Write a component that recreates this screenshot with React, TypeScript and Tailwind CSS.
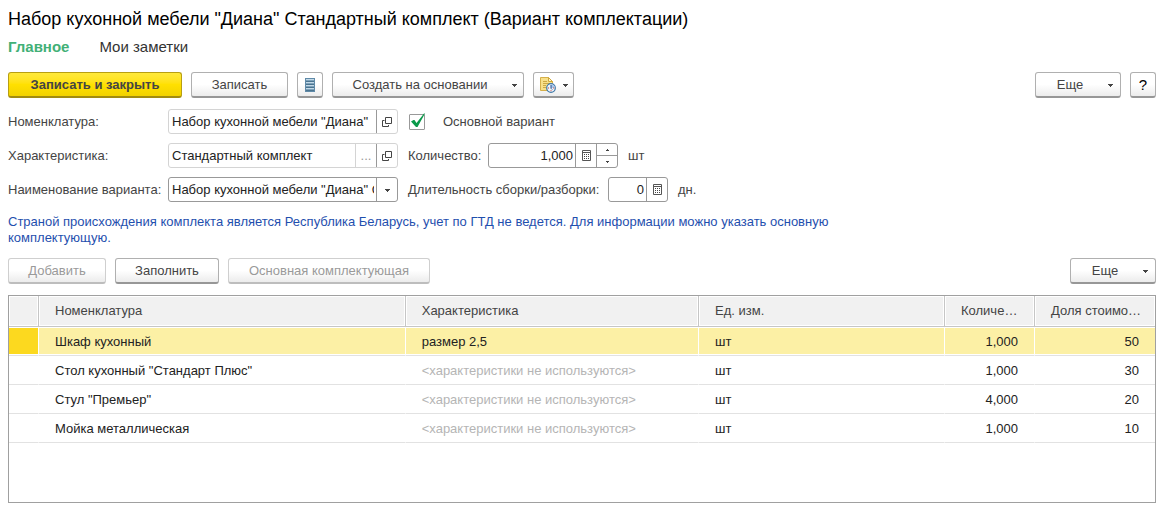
import type { ButtonHTMLAttributes, ReactNode } from "react";
import clsx from "clsx";

interface KitItem {
  name: string;
  feature?: string;
  unit: string;
  quantity: string;
  share: number;
}

const items: KitItem[] = [
  { name: "Шкаф кухонный", feature: "размер 2,5", unit: "шт", quantity: "1,000", share: 50 },
  { name: 'Стол кухонный "Стандарт Плюс"', unit: "шт", quantity: "1,000", share: 30 },
  { name: 'Стул "Премьер"', unit: "шт", quantity: "4,000", share: 20 },
  { name: "Мойка металлическая", unit: "шт", quantity: "1,000", share: 10 },
];

function Caret() {
  return (
    <svg width="5" height="5" viewBox="0 0 5 5" className="shrink-0" aria-hidden="true">
      <path d="M0 2h5v1H4v1H3v1H2V4H1V3H0z" fill="#444" />
    </svg>
  );
}

function OpenIcon() {
  return (
    <svg width="10" height="11" viewBox="0 0 10 11" fill="none" stroke="#444" aria-hidden="true">
      <path d="M3.5 1.5h6v6h-6z" />
      <path d="M2.5 4.5h-2v6h6V9" />
    </svg>
  );
}

function CalculatorIcon() {
  return (
    <svg width="9" height="11" viewBox="0 0 9 11" aria-hidden="true">
      <path d="M0.5 0.5h8v10h-8z" fill="none" stroke="#555" />
      <path d="M1 2.5h7" stroke="#555" />
      <path
        d="M2 4h1v1H2zM4 4h1v1H4zM6 4h1v1H6zM2 6h1v1H2zM4 6h1v1H4zM6 6h1v1H6zM2 8h1v1H2zM4 8h1v1H4zM6 8h1v1H6z"
        fill="#444"
      />
    </svg>
  );
}

function ListIcon() {
  return (
    <svg width="10" height="14" viewBox="0 0 10 14" aria-hidden="true">
      <path d="M0 0h10v14H0z" fill="#7da2bb" />
      <path d="M0 0h10v1H0zM0 13h10v1H0zM0 0h1v14H0zM9 0h1v14H9z" fill="#5f8aa8" />
      <path d="M1 1h8v1H1zM1 4h8v1H1zM1 7h8v1H1zM1 10h8v1H1z" fill="#c3d9e8" />
      <path d="M1 3h8v1H1zM1 6h8v1H1zM1 9h8v1H1zM1 12h8v1H1z" fill="#4b7490" />
    </svg>
  );
}

function ReportIcon() {
  return (
    <svg width="16" height="16" viewBox="0 0 16 16" aria-hidden="true">
      <path d="M0.5 0.5h8l4 4v9h-12z" fill="#f8e08a" stroke="#d6b04a" />
      <path d="M8.5 0.5v4h4z" fill="#fff3c4" stroke="#cfa83c" />
      <path d="M3 4.5h4M3 6.5h7M3 8.5h3M3 10.5h3" stroke="#cda945" />
      <circle cx="11" cy="11" r="4.3" fill="#eef5fb" stroke="#3f78a8" strokeWidth="1.2" />
      <path d="M11 11V7.3A3.7 3.7 0 0 1 14.7 11z" fill="#a9c8ec" />
      <path d="M11 8v3.3l1.2 1.2" fill="none" stroke="#274d8a" />
      <path d="M8 11h1M13.2 11h1M11 13.2v1" stroke="#c9413a" />
    </svg>
  );
}

interface BarButtonProps extends ButtonHTMLAttributes<HTMLButtonElement> {
  children: ReactNode;
}

function BarButton({ children, className, ...props }: BarButtonProps) {
  return (
    <button
      type="button"
      className={clsx(
        "flex h-[26px] shrink-0 items-center justify-center rounded-[3px] border border-b-2 bg-linear-to-b from-white from-50% to-[#ececec]",
        props.disabled
          ? "border-[#cfcfcf] border-b-[#bdbdbd] text-[#9a9a9a]"
          : "border-[#b0b0b0] border-b-[#979797] text-[#444]",
        className,
      )}
      {...props}
    >
      {children}
    </button>
  );
}

function MoreButton() {
  return (
    <BarButton className="w-[86px] gap-[25px] pl-3.5">
      Еще
      <Caret />
    </BarButton>
  );
}

interface FieldProps {
  id: string;
  value: string;
  className: string;
  muted?: boolean;
  numeric?: boolean;
  children: ReactNode;
}

function Field({ id, value, className, muted, numeric, children }: FieldProps) {
  return (
    <div
      className={clsx(
        "flex h-[25px] shrink-0 rounded-[3px] border bg-white",
        muted ? "border-[#d4d4d4]" : "border-[#999]",
        className,
      )}
    >
      <input
        id={id}
        defaultValue={value}
        className={clsx(
          "min-w-0 flex-1 bg-transparent text-[#222] outline-none",
          numeric ? "pr-0.5 text-right" : "mr-0.5 pl-[3px]",
        )}
      />
      {children}
    </div>
  );
}

interface FieldButtonProps {
  label: string;
  light?: boolean;
  children: ReactNode;
}

function FieldButton({ label, light, children }: FieldButtonProps) {
  return (
    <button
      type="button"
      aria-label={label}
      className={clsx(
        "flex w-[21px] shrink-0 items-center justify-center border-l",
        light ? "border-[#d4d4d4] text-[#999]" : "border-[#999]",
      )}
    >
      {children}
    </button>
  );
}

export default function App() {
  return (
    <main className="pt-2 pr-[11px] pb-1.5 pl-2 font-['Liberation_Sans',Arial,sans-serif] text-[13px] leading-4 text-[#444]">
      <h1 className="text-[18px] leading-[22px] text-black">
        Набор кухонной мебели "Диана" Стандартный комплект (Вариант комплектации)
      </h1>

      <nav className="mt-2 flex gap-[30px] text-[15px] leading-[18px]">
        <a href="#main" className="font-bold text-[#42b077]">
          Главное
        </a>
        <a href="#notes" className="text-[#333]">
          Мои заметки
        </a>
      </nav>

      <div className="mt-4 flex items-center gap-[9px]">
        <button
          type="button"
          className="h-[26px] w-[174px] shrink-0 rounded-[3px] border border-b-2 border-[#b89f12] border-b-[#a18b10] bg-linear-to-b from-[#ffe93a] via-[#ffe000] to-[#f2d200] font-bold text-[#444]"
        >
          Записать и закрыть
        </button>
        <BarButton className="w-[97px]">Записать</BarButton>
        <BarButton className="w-[26px]" aria-label="Список">
          <ListIcon />
        </BarButton>
        <BarButton className="w-[192px] gap-[25px] pl-3.5">
          Создать на основании
          <Caret />
        </BarButton>
        <BarButton className="w-[41px] gap-[7px]" aria-label="Отчеты">
          <ReportIcon />
          <Caret />
        </BarButton>
        <div className="ml-auto flex gap-[9px]">
          <MoreButton />
          <BarButton className="w-[26px] text-[15px] text-black">?</BarButton>
        </div>
      </div>

      <div className="mt-[11px] grid grid-cols-[150px_230px_1fr] items-center gap-x-2.5 gap-y-[9px]">
        <label htmlFor="item" className="whitespace-nowrap">
          Номенклатура:
        </label>
        <Field id="item" value={'Набор кухонной мебели "Диана"'} className="w-full" muted>
          <FieldButton label="Открыть">
            <OpenIcon />
          </FieldButton>
        </Field>
        <div className="flex items-center gap-[18px] pl-px">
          <span className="relative flex size-4">
            <input
              id="main-variant"
              type="checkbox"
              defaultChecked
              className="peer size-4 appearance-none rounded-[1px] border border-[#999] bg-white"
            />
            <svg
              viewBox="0 0 16 16"
              className="pointer-events-none absolute -top-px left-px hidden size-4 peer-checked:block"
              aria-hidden="true"
            >
              <path d="M1 8.5l2.5-1.5h1l2 3L14 0.5h1L7.5 14H6z" fill="#0a9a4a" />
            </svg>
          </span>
          <label htmlFor="main-variant">Основной вариант</label>
        </div>

        <label htmlFor="feature" className="whitespace-nowrap">
          Характеристика:
        </label>
        <Field id="feature" value="Стандартный комплект" className="w-full" muted>
          <FieldButton label="Выбрать" light>
            ...
          </FieldButton>
          <FieldButton label="Открыть">
            <OpenIcon />
          </FieldButton>
        </Field>
        <div className="flex items-center">
          <label htmlFor="quantity" className="w-20">
            Количество:
          </label>
          <Field id="quantity" value="1,000" className="w-[130px]" numeric>
            <FieldButton label="Калькулятор">
              <CalculatorIcon />
            </FieldButton>
            <div className="flex w-[21px] flex-col border-l border-[#999]">
              <button
                type="button"
                aria-label="Увеличить"
                className="flex flex-1 items-center justify-center border-b border-[#999]"
              >
                <svg width="3" height="2" viewBox="0 0 3 2" aria-hidden="true">
                  <path d="M1 0h1v1h1v1H0V1h1z" fill="#444" />
                </svg>
              </button>
              <button type="button" aria-label="Уменьшить" className="flex flex-1 items-center justify-center">
                <svg width="3" height="2" viewBox="0 0 3 2" aria-hidden="true">
                  <path d="M0 0h3v1H2v1H1V1H0z" fill="#444" />
                </svg>
              </button>
            </div>
          </Field>
          <span className="ml-2.5">шт</span>
        </div>

        <label htmlFor="variant-name" className="whitespace-nowrap">
          Наименование варианта:
        </label>
        <Field
          id="variant-name"
          value={'Набор кухонной мебели "Диана" Стандартный комплект'}
          className="w-full"
        >
          <FieldButton label="Выбрать из списка">
            <Caret />
          </FieldButton>
        </Field>
        <div className="flex items-center">
          <label htmlFor="duration" className="w-[200px] whitespace-nowrap">
            Длительность сборки/разборки:
          </label>
          <Field id="duration" value="0" className="w-[60px]" numeric>
            <FieldButton label="Калькулятор">
              <CalculatorIcon />
            </FieldButton>
          </Field>
          <span className="ml-2.5">дн.</span>
        </div>
      </div>

      <p className="mt-3 max-w-[840px] text-[#1f4fae]">
        Страной происхождения комплекта является Республика Беларусь, учет по ГТД не ведется. Для
        информации можно указать основную комплектующую.
      </p>

      <div className="mt-3 flex items-center gap-[9px]">
        <BarButton className="w-[98px]" disabled>
          Добавить
        </BarButton>
        <BarButton className="w-[104px]">Заполнить</BarButton>
        <BarButton className="w-[202px]" disabled>
          Основная комплектующая
        </BarButton>
        <div className="ml-auto">
          <MoreButton />
        </div>
      </div>

      <div className="mt-[11px] min-h-[208px] border border-[#a0a0a0]">
        <table className="w-full table-fixed border-separate border-spacing-0 text-left">
          <colgroup>
            <col className="w-[30px]" />
            <col className="w-[32%]" />
            <col className="w-[25.6%]" />
            <col />
            <col className="w-[90px]" />
            <col className="w-[120px]" />
          </colgroup>
          <thead>
            <tr className="h-[31px] *:truncate *:border-r *:border-b *:border-[#c6c6c6] *:bg-[#f1f1f1] *:pr-3 *:pl-4 *:font-normal *:inset-shadow-[0_0_0_1px_#fff] *:last:border-r-0">
              <th />
              <th>Номенклатура</th>
              <th>Характеристика</th>
              <th>Ед. изм.</th>
              <th>Количество</th>
              <th>Доля стоимости</th>
            </tr>
          </thead>
          <tbody className="text-[#222]">
            {items.map((item, index) => (
              <tr
                key={item.name}
                className={clsx(
                  "h-[29px] *:truncate *:border-r *:border-b *:border-b-[#e2e2e2] *:px-4 *:pt-0.5 *:last:border-r-0",
                  index === 0
                    ? "bg-[#fcf0a5] *:border-r-white *:inset-shadow-[0_1px_0_#fff,0_-1px_0_#fff]"
                    : "*:border-r-transparent",
                )}
              >
                <td className={clsx(index === 0 && "bg-[#fcd91f]")} />
                <td>{item.name}</td>
                <td className={clsx(!item.feature && "text-[#b5b5b5]")}>
                  {item.feature ?? "<характеристики не используются>"}
                </td>
                <td>{item.unit}</td>
                <td className="text-right">{item.quantity}</td>
                <td className="text-right">{item.share}</td>
              </tr>
            ))}
          </tbody>
        </table>
      </div>
    </main>
  );
}
